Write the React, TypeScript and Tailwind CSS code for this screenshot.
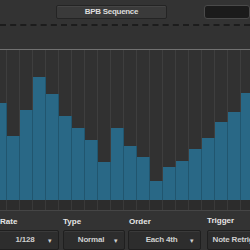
import React from "react";

// bar heights in px (chart is 150px tall), left column is partly cut off
const bars = [97, 64, 90, 123, 106, 84, 72, 60, 38, 72, 54, 43, 19, 33, 39, 51, 62, 78, 88, 107];

const font = { fontFamily: '"Liberation Sans", Arial, sans-serif' };

function Dropdown({ value, width }: { value: string; width: string }) {
  return (
    <div
      className={`${width} h-[20px] flex items-center rounded-[2px] border border-[#1f1f1f] bg-[#2d2d2d] shadow-[inset_0_1px_0_#3a3a3a]`}
    >
      <span className="flex-1 text-center text-[8px] font-bold tracking-[-0.2px] text-[#cfcfcf] pl-[4px]">{value}</span>
      <span className="w-[10px] text-[7px] text-[#d0d0d0] leading-none">▾</span>
    </div>
  );
}

export default function App() {
  return (
    <div className="w-[250px] h-[250px] overflow-hidden bg-[#333333] flex flex-col" style={font}>
      {/* top bar */}
      <div className="h-[24px] flex items-start pt-[5px] shrink-0">
        <div className="ml-[56px] w-[121px] h-[14px] rounded-[2px] border border-[#242424] bg-[#3a3a3a] flex items-center justify-center shadow-[inset_0_1px_0_#454545]">
          <span className="text-[8px] font-bold tracking-[-0.3px] text-[#dcdcdc]">BPB Sequence</span>
        </div>
        <div className="ml-[37px] w-[50px] h-[14px] rounded-[3px] border border-[#4a4a4a] bg-[#1b1b1b]" />
      </div>
      <div className="h-[2px] border-t-2 border-dashed border-[#1c1c1c] shrink-0" />
      <div className="h-[23px] bg-[#323232] shrink-0" />
      <div className="h-px bg-[#707070] shrink-0" />

      {/* sequence chart */}
      <div className="h-[160px] overflow-hidden shrink-0">
        <div className="flex h-full ml-[-6px]">
          {bars.map((h, i) => (
            <div key={i} className="w-[13px] shrink-0 flex flex-col">
              <div className="flex-1 bg-[#313131] border-r border-[#3e3e3e]" />
              <div className="bg-[#296886] border-r border-[#21566f]" style={{ height: h }} />
              <div className="h-[10px] bg-[#2c2c2c] border-r border-[#393939]" />
            </div>
          ))}
        </div>
      </div>
      <div className="h-px bg-[#454545] shrink-0" />

      {/* controls */}
      <div className="flex ml-[-3px] pt-[5px] text-[#e6e6e6]">
        <div className="flex flex-col">
          <span className="h-[14px] pl-[3px] text-[8px] font-bold">Rate</span>
          <Dropdown value="1/128" width="w-[62px]" />
        </div>
        <div className="flex flex-col ml-[4px]">
          <span className="h-[14px] text-[8px] font-bold">Type</span>
          <Dropdown value="Normal" width="w-[62px]" />
        </div>
        <div className="flex flex-col ml-[3px]">
          <span className="h-[14px] pl-[1px] text-[8px] font-bold">Order</span>
          <Dropdown value="Each 4th" width="w-[73px]" />
        </div>
        <div className="flex flex-col ml-[6px]">
          <span className="h-[14px] pb-[2px] text-[8px] font-bold leading-[10px]">Trigger</span>
          <Dropdown value="Note Retrigger" width="w-[70px]" />
        </div>
      </div>
    </div>
  );
}
